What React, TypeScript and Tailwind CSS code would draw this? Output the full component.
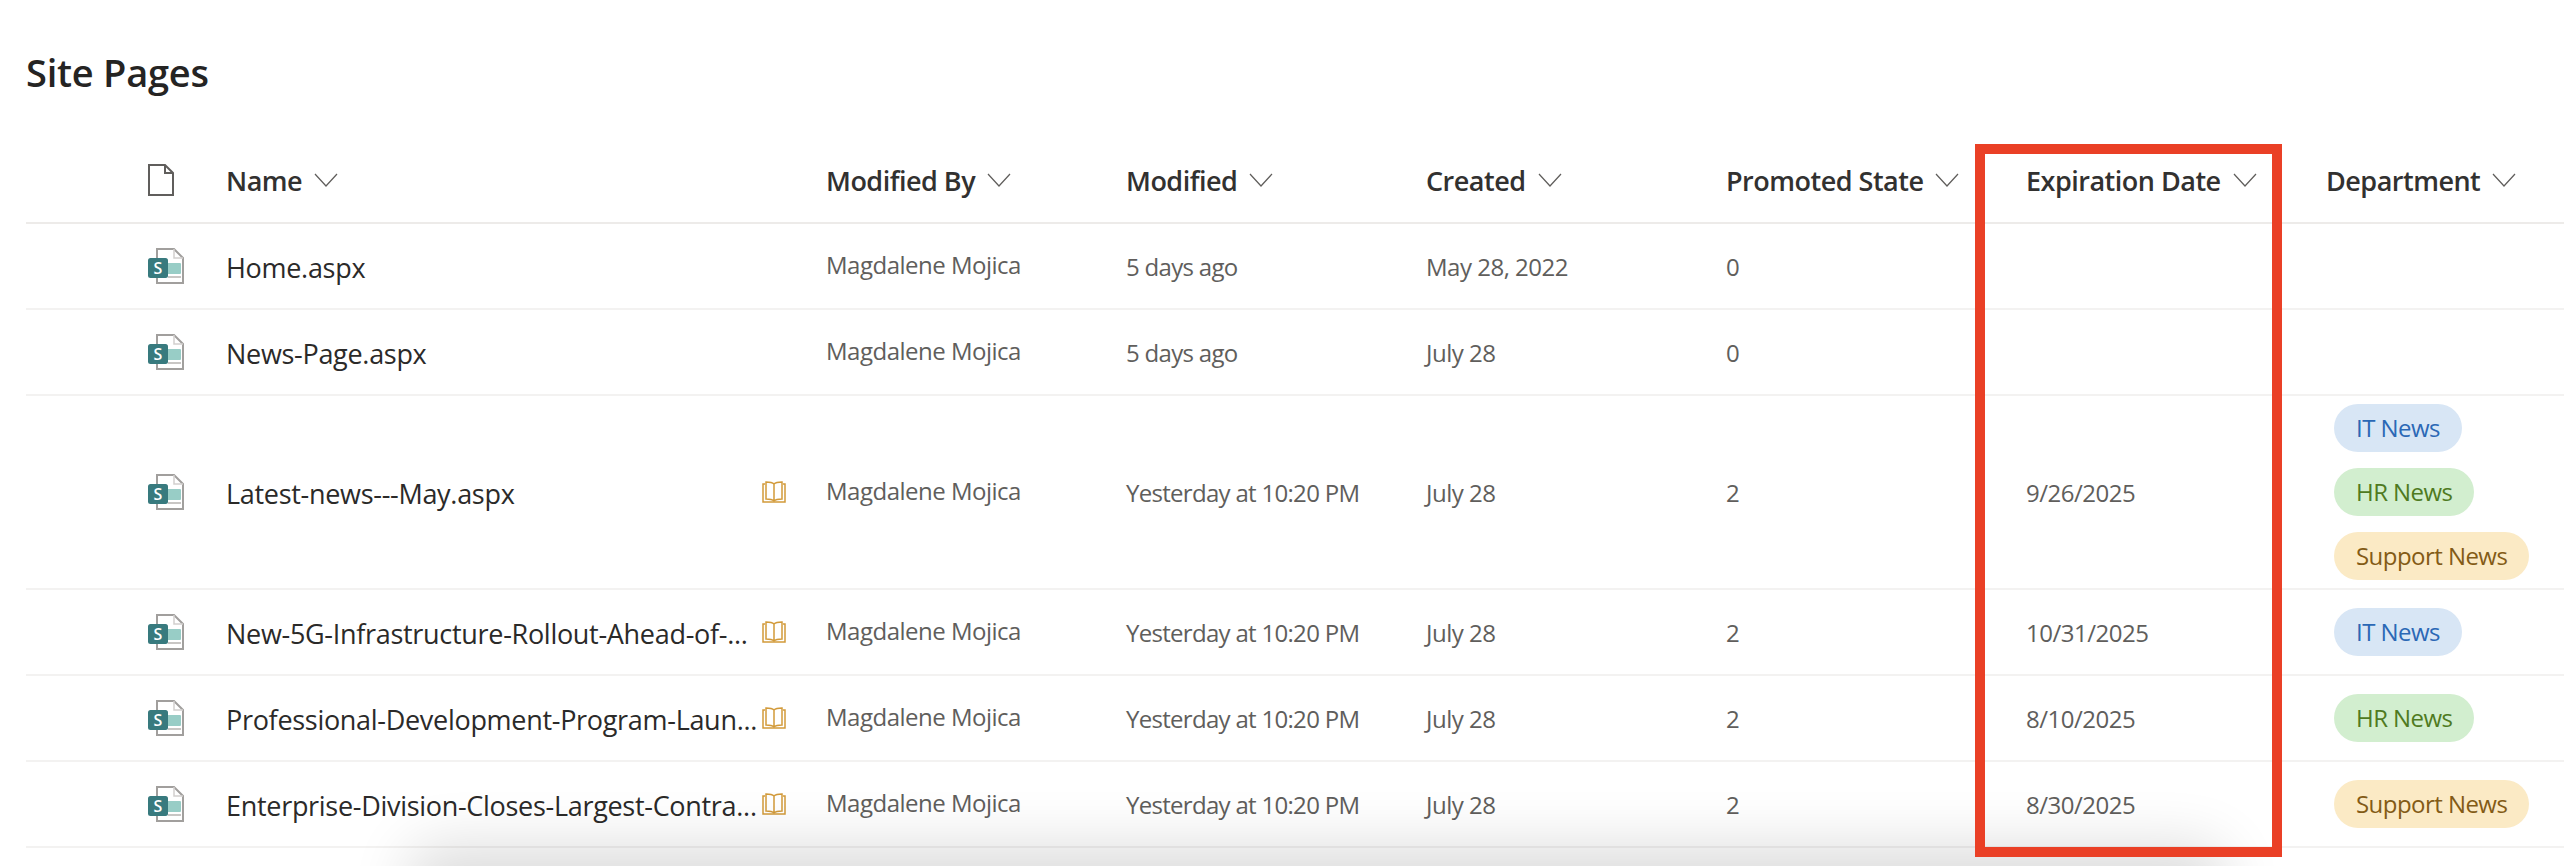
const rows = [
  { name: "Home.aspx", modified: "5 days ago", created: "May 28, 2022", state: "0", expires: "", tags: [] as string[], book: false, tall: false },
  { name: "News-Page.aspx", modified: "5 days ago", created: "July 28", state: "0", expires: "", tags: [], book: false, tall: false },
  { name: "Latest-news---May.aspx", modified: "Yesterday at 10:20 PM", created: "July 28", state: "2", expires: "9/26/2025", tags: ["IT News", "HR News", "Support News"], book: true, tall: true },
  { name: "New-5G-Infrastructure-Rollout-Ahead-of-...", modified: "Yesterday at 10:20 PM", created: "July 28", state: "2", expires: "10/31/2025", tags: ["IT News"], book: true, tall: false },
  { name: "Professional-Development-Program-Laun...", modified: "Yesterday at 10:20 PM", created: "July 28", state: "2", expires: "8/10/2025", tags: ["HR News"], book: true, tall: false },
  { name: "Enterprise-Division-Closes-Largest-Contra...", modified: "Yesterday at 10:20 PM", created: "July 28", state: "2", expires: "8/30/2025", tags: ["Support News"], book: true, tall: false },
];

const tagStyles: Record<string, string> = {
  "IT News": "bg-[#d8e6f5] text-[#2b68b5]",
  "HR News": "bg-[#d2eecf] text-[#4f7a21]",
  "Support News": "bg-[#fbeac5] text-[#835b16]",
};

function Chevron() {
  return (
    <svg width="24" height="14" viewBox="0 0 24 14" fill="none" className="shrink-0">
      <path d="M1 1l11 12L23 1" stroke="#605e5c" strokeWidth="1.25" />
    </svg>
  );
}

function BlankDoc() {
  return (
    <svg width="26" height="32" viewBox="0 0 26 32" fill="none">
      <path d="M1 1h16l8 8v22H1z M17 1v8h8" stroke="#605e5c" strokeWidth="2" />
    </svg>
  );
}

function PageIcon() {
  return (
    <svg width="36" height="36" viewBox="0 0 36 36" fill="none">
      <path d="M9 1h17l9 9v25H9z" fill="#fff" stroke="#a19f9d" strokeWidth="2" />
      <path d="M26 1v9h9" stroke="#d2d0ce" strokeWidth="1.5" />
      <rect x="16" y="15" width="17" height="11" rx="1" fill="#98cdc6" />
      <rect x="20" y="28" width="13" height="2" fill="#c8c6c4" />
      <rect x="0" y="10" width="20" height="20" rx="2.5" fill="#387a7e" />
      <text x="10" y="25.5" textAnchor="middle" fontSize="16" fontWeight="600" fill="#fff" fontFamily="'Open Sans', sans-serif">S</text>
    </svg>
  );
}

function BookIcon() {
  return (
    <svg width="24" height="23" viewBox="0 0 24 23" fill="none">
      <path d="M3 3H1v18h22V3h-2" stroke="#d29a3a" strokeWidth="1.5" />
      <path d="M12 3c-2-2-5-2-8-2v17c3 0 6 0 8 2 2-2 5-2 8-2V1c-3 0-6 0-8 2zM12 3v17" stroke="#d29a3a" strokeWidth="1.5" />
    </svg>
  );
}

function HeaderCell({ label, width }: { label: string; width: string }) {
  return (
    <div className={`flex items-center gap-[12px] ${width}`}>
      <span className="pt-[2px] text-[27px] font-semibold tracking-[-0.5px] text-[#323130]">{label}</span>
      <Chevron />
    </div>
  );
}

export default function App() {
  return (
    <div className="relative h-[866px] overflow-hidden bg-white font-['Open_Sans',sans-serif]">
      <h1 className="pl-[26px] pt-[46px] text-[38px] font-semibold leading-[52px] tracking-[-0.25px] text-[#252423]">
        Site Pages
      </h1>

      <div className="mt-[40px] pl-[26px]">
        <div className="flex h-[86px] items-center border-b-2 border-[#edebe9]">
          <div className="flex w-[200px] pl-[122px]">
            <BlankDoc />
          </div>
          <HeaderCell label="Name" width="w-[600px]" />
          <HeaderCell label="Modified By" width="w-[300px]" />
          <HeaderCell label="Modified" width="w-[300px]" />
          <HeaderCell label="Created" width="w-[300px]" />
          <HeaderCell label="Promoted State" width="w-[300px]" />
          <HeaderCell label="Expiration Date" width="w-[300px]" />
          <HeaderCell label="Department" width="w-[238px]" />
        </div>

        {rows.map((row) => (
          <div
            key={row.name}
            className={`flex items-center border-b-2 border-[#f3f2f1] ${row.tall ? "h-[194px]" : "h-[86px]"}`}
          >
            <div className="flex w-[200px] pl-[122px]">
              <PageIcon />
            </div>
            <div className="flex w-[600px] items-center justify-between pr-[40px]">
              <span className="whitespace-nowrap pt-[4px] text-[27px] tracking-[-0.3px] text-[#2b2a29]">{row.name}</span>
              {row.book && <BookIcon />}
            </div>
            <div className="w-[300px] pb-[3px] text-[24px] tracking-[-0.5px] text-[#605e5c]">Magdalene Mojica</div>
            <div className="w-[300px] pt-[2px] text-[24px] tracking-[-0.7px] text-[#605e5c]">{row.modified}</div>
            <div className="w-[300px] pt-[2px] text-[24px] tracking-[-0.5px] text-[#605e5c]">{row.created}</div>
            <div className="w-[300px] pt-[2px] text-[24px] tracking-[-0.5px] text-[#605e5c]">{row.state}</div>
            <div className="w-[300px] pt-[2px] text-[24px] tracking-[-0.5px] text-[#605e5c]">{row.expires}</div>
            <div className="flex w-[238px] flex-col items-start gap-[16px] pl-[8px]">
              {row.tags.map((tag) => (
                <span
                  key={tag}
                  className={`flex h-[48px] items-center whitespace-nowrap rounded-[24px] px-[22px] text-[24px] tracking-[-0.55px] ${tagStyles[tag]}`}
                >
                  {tag}
                </span>
              ))}
            </div>
          </div>
        ))}
      </div>

      {/* page's bottom panel shadow coming up from below the fold */}
      <div className="absolute bottom-[-60px] left-[430px] right-[360px] h-[60px] rounded-[8px] shadow-[0_0_60px_20px_rgba(0,0,0,0.14)]" />

      {/* annotation box round the expiration column */}
      <div className="absolute left-[1975px] top-[144px] h-[713px] w-[307px] border-[10px] border-[#ea4026]" />
    </div>
  );
}
